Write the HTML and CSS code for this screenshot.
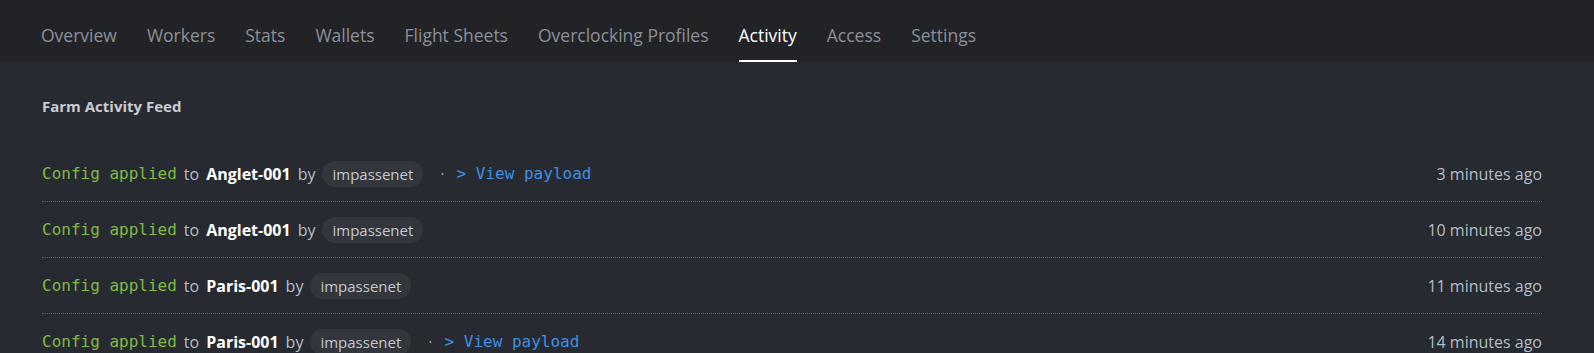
FILE: index.html
```html
<!DOCTYPE html>
<html lang="en">
<head>
  <meta charset="UTF-8">
  <meta name="viewport" content="width=device-width, initial-scale=1.0">
  <title>Farm Activity</title>
  <link rel="stylesheet" href="styles.css">
</head>
<body>
  <nav class="tabs">
    <a class="tab" href="#">Overview</a>
    <a class="tab" href="#">Workers</a>
    <a class="tab" href="#">Stats</a>
    <a class="tab" href="#">Wallets</a>
    <a class="tab" href="#">Flight Sheets</a>
    <a class="tab" href="#">Overclocking Profiles</a>
    <a class="tab active" href="#">Activity</a>
    <a class="tab" href="#">Access</a>
    <a class="tab" href="#">Settings</a>
  </nav>

  <main class="content">
    <h2 class="feed-title">Farm Activity Feed</h2>
    <ul class="feed">
      <li class="feed-item">
        <div class="feed-text">
          <span class="action">Config applied</span>
          <span>to</span>
          <strong class="worker">Anglet-001</strong>
          <span>by</span>
          <span class="user">impassenet</span>
          <span class="dot">·</span>
          <a class="payload" href="#">&gt; View payload</a>
        </div>
        <span class="time">3 minutes ago</span>
      </li>
      <li class="feed-item">
        <div class="feed-text">
          <span class="action">Config applied</span>
          <span>to</span>
          <strong class="worker">Anglet-001</strong>
          <span>by</span>
          <span class="user">impassenet</span>
        </div>
        <span class="time">10 minutes ago</span>
      </li>
      <li class="feed-item">
        <div class="feed-text">
          <span class="action">Config applied</span>
          <span>to</span>
          <strong class="worker">Paris-001</strong>
          <span>by</span>
          <span class="user">impassenet</span>
        </div>
        <span class="time">11 minutes ago</span>
      </li>
      <li class="feed-item">
        <div class="feed-text">
          <span class="action">Config applied</span>
          <span>to</span>
          <strong class="worker">Paris-001</strong>
          <span>by</span>
          <span class="user">impassenet</span>
          <span class="dot">·</span>
          <a class="payload" href="#">&gt; View payload</a>
        </div>
        <span class="time">14 minutes ago</span>
      </li>
    </ul>
  </main>
</body>
</html>
```

FILE: styles.css
```css
body {
  margin: 0;
  background-color: #272a30;
  font-family: 'Open Sans', 'Noto Sans', Arial, sans-serif;
  color: #b8bec8;
}
.tabs {
  display: flex;
  gap: 30px;
  height: 62px;
  padding: 0 41px;
  background-color: #222327;
  box-sizing: border-box;
}
.tab {
  display: flex;
  align-items: center;
  height: 62px;
  padding-top: 9px;
  box-sizing: border-box;
  font-size: 17.5px;
  color: #8b9098;
  text-decoration: none;
  border-bottom: 2px solid transparent;
}
.tab.active {
  color: #ffffff;
  border-bottom-color: #ffffff;
}
.content {
  padding: 34px 52px 0 42px;
}
.feed-title {
  margin: 0 0 30px;
  font-size: 15px;
  font-weight: 700;
  color: #c9ccd2;
}
.feed {
  list-style: none;
  margin: 0;
  padding: 0;
}
.feed-item {
  display: flex;
  align-items: center;
  justify-content: space-between;
  height: 55px;
  border-bottom: 1px dotted #555a62;
}
.feed-text {
  display: flex;
  align-items: center;
  gap: 7px;
  font-size: 16px;
}
.action {
  font-family: 'DejaVu Sans Mono', monospace;
  font-size: 16px;
  color: #7fba45;
}
.worker {
  color: #ffffff;
  font-weight: 700;
}
.user {
  padding: 2px 10px;
  line-height: 22px;
  font-size: 15px;
  border-radius: 14px;
  background-color: #33363d;
  color: #c3c8d0;
}
.dot {
  margin: 0 5px 0 10px;
  color: #9aa0a8;
}
.payload {
  font-family: 'DejaVu Sans Mono', monospace;
  font-size: 16px;
  color: #3f8fe2;
  text-decoration: none;
}
.time {
  font-size: 16px;
  color: #b4bcc8;
}
```
